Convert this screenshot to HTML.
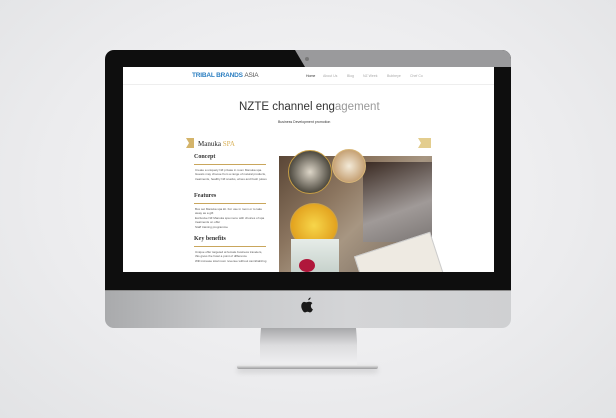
<!DOCTYPE html>
<html><head><style>
*{margin:0;padding:0;box-sizing:border-box}
body{width:616px;height:418px;overflow:hidden;background:radial-gradient(ellipse at 50% 45%,#f7f7f8 0%,#ececee 60%,#e2e3e5 100%);position:relative;font-family:"Liberation Sans",sans-serif}
.abs{position:absolute}
.bezel{left:105px;top:50px;width:406px;height:241px;background:#0e0e0e;border-radius:9px 9px 0 0;overflow:hidden}
.refl{left:0;top:0;width:406px;height:17px;background:#9a9a9c;clip-path:polygon(190px 0,406px 0,406px 17px,200px 17px)}
.chin{left:105px;top:290px;width:406px;height:38px;background:linear-gradient(90deg,#a9aaac 0%,#c8c9cb 30%,#d4d5d7 60%,#cfd0d2 100%);border-radius:0 0 9px 9px;border-top:1px solid #8a8a8a}
.screen{left:123px;top:67px;width:371px;height:205px;background:#fff;overflow:hidden}
.nav{height:18px;border-bottom:1px solid #eee;position:relative}
.t{position:absolute;white-space:nowrap}
.stand{left:260px;top:328px;width:97px;height:38px;background:linear-gradient(180deg,#a8a9ab 0%,#dcdcde 45%,#f2f2f3 100%);clip-path:polygon(1px 0,96px 0,99px 38px,-2px 38px)}
.base{left:237px;top:365px;width:141px;height:4px;background:linear-gradient(180deg,#eee,#9b9b9d);border-radius:2px;box-shadow:0 3px 6px rgba(0,0,0,.15)}
.small{font-size:3px;color:#555;line-height:4.4px}
.h{font-family:"Liberation Serif",serif;font-size:6px;font-weight:bold;color:#333}
.gl{height:1px;background:#c9a65c}
.nv{position:absolute;top:7px;font-size:3.5px;color:#aaa;white-space:nowrap}
</style></head><body>
<div class="abs bezel"><div class="abs refl"></div><div class="abs" style="left:200px;top:7px;width:4px;height:4px;border-radius:50%;background:#777"></div></div>
<div class="abs chin"></div>
<svg class="abs" style="left:301px;top:297px" width="14" height="17" viewBox="0 0 14 17"><path d="M9.6 0.5c.1 1.2-.9 2.6-2.3 2.7-.2-1.2.9-2.5 2.3-2.7zM11.9 12.3c-.6 1.4-1.4 3.1-2.7 3.1-1.1 0-1.4-.7-2.7-.7s-1.7.7-2.7.7c-1.3 0-2.4-2.1-3-3.6C-.3 9.1.3 5.9 2.5 5c1.1-.5 2.2.3 2.9.3s1.8-.8 3.2-.5c.6 0 2 .3 2.8 1.5-2.3 1.3-1.9 4.7.5 6z" fill="#1a1a1a"/></svg>
<div class="abs screen">
 <div class="nav">
  <div class="t" style="left:69px;top:5px;font-size:6.5px;font-weight:bold;color:#2c7fc1;letter-spacing:-.2px">TRIBAL BRANDS <span style="color:#555;font-weight:normal">ASIA</span></div>
  <div class="nv" style="left:183px;color:#333">Home</div>
  <div class="nv" style="left:200px">About Us</div>
  <div class="nv" style="left:224px">Blog</div>
  <div class="nv" style="left:240px">NZ Week</div>
  <div class="nv" style="left:264px">Bubbeye</div>
  <div class="nv" style="left:287px">Chef Co</div>
 </div>
 <div class="t" style="left:116px;top:34px;font-size:11.5px;color:#333">NZTE channel eng<span style="color:#999">agement</span></div>
 <div class="t" style="left:155px;top:53px;font-size:3.5px;color:#333">Business Development promotion</div>
 <div class="abs" style="left:63px;top:71px;width:8px;height:10px;background:#d4b46a;clip-path:polygon(0 0,100% 0,100% 100%,0 100%,3px 50%)"></div>
 <div class="t h" style="left:75px;top:73px;font-size:7px;font-weight:normal;color:#222">Manuka <span style="color:#d9b25a">SPA</span></div>
 <div class="abs" style="left:295px;top:71px;width:13px;height:10px;background:#e3cd8e;clip-path:polygon(0 0,100% 0,100% 100%,0 100%,3px 50%)"></div>
 <div class="t h" style="left:71px;top:87px">Concept</div>
 <div class="abs gl" style="left:71px;top:97px;width:72px"></div>
 <div class="abs small" style="left:72px;top:101px;width:72px">Create a uniquely NZ private in room Manuka spa. Guests may choose from a range of natural products, treatments, healthy NZ snacks, wines and fresh juices</div>
 <div class="t h" style="left:71px;top:126px">Features</div>
 <div class="abs gl" style="left:71px;top:136px;width:72px"></div>
 <div class="abs small" style="left:72px;top:140px;width:72px">Box set Manuka spa kit. For use in room or to take away as a gift<br>Exclusive NZ Manuka spa menu with choices of spa treatments on offer<br>Staff training programme</div>
 <div class="t h" style="left:71px;top:169px">Key benefits</div>
 <div class="abs gl" style="left:71px;top:179px;width:72px"></div>
 <div class="abs small" style="left:72px;top:183px;width:72px">Unique offer targeted at female business travelers, this gives the hotel a point of difference<br>Will increase total room revenue without cannibalizing</div>
 <div class="abs" style="left:156px;top:89px;width:153px;height:116px;background:linear-gradient(135deg,#5a4636 0%,#8c7660 35%,#a79682 55%,#6e6258 100%)"></div>
 <div class="abs" style="left:240px;top:95px;width:69px;height:80px;background:linear-gradient(160deg,#3a2a22,#a09a98 60%,#7b7674)"></div>
 <div class="abs" style="left:165px;top:83px;width:44px;height:44px;border-radius:50%;background:radial-gradient(circle,#ddd6c8,#4e4a40 70%);border:1.5px solid #c79e45"></div>
 <div class="abs" style="left:209px;top:82px;width:34px;height:34px;border-radius:50%;background:radial-gradient(circle,#f3ead8,#c09868 80%);border:1px solid #d7b678"></div>
 <div class="abs" style="left:167px;top:136px;width:48px;height:45px;border-radius:50%;background:radial-gradient(circle,#f7d64a,#e3a420 70%);border:1px solid #caa24a"></div>
 <div class="abs" style="left:168px;top:172px;width:48px;height:33px;background:linear-gradient(180deg,#e6ece8,#c7d2cc)"></div>
 <div class="abs" style="left:176px;top:192px;width:16px;height:13px;border-radius:50%;background:#b0173b"></div>
 <div class="abs" style="left:236px;top:176px;width:80px;height:45px;background:#eeeae2;transform:rotate(-18deg);border:1px solid #ccc"></div>
</div>
<div class="abs stand"></div>
<div class="abs base"></div>
</body></html>
